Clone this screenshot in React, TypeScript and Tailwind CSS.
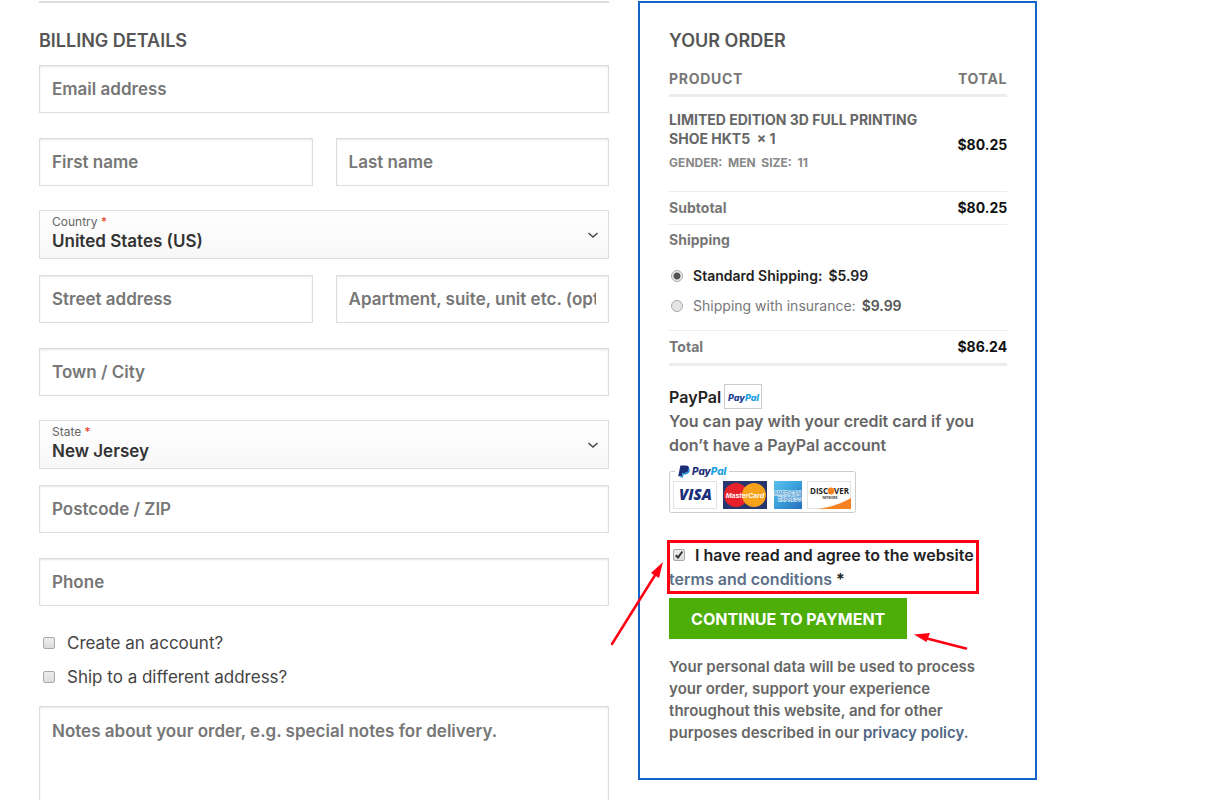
import React, { useState } from "react";

const inputClass =
  "block w-full min-w-0 h-12 px-3 border border-[#dddddd] bg-white text-[17px] font-semibold text-[#333333] placeholder:text-[#777777] placeholder:opacity-100 shadow-[inset_0_1px_2px_rgba(0,0,0,0.1)] outline-none";

type FieldProps = {
  id: string;
  label: string;
  type?: string;
};

const Field: React.FC<FieldProps> = ({ id, label, type = "text" }) => (
  <input id={id} type={type} aria-label={label} placeholder={label} className={inputClass} />
);

type SelectFieldProps = {
  id: string;
  label: string;
  options: string[];
};

const SelectField: React.FC<SelectFieldProps> = ({ id, label, options }) => (
  <div className="relative h-[49px] -mt-px -mb-[9px] border border-[#dddddd] bg-gradient-to-b from-white to-[#f7f7f7]">
    <label
      htmlFor={id}
      className="block px-3 pt-1 text-[12px] leading-[14px] text-[#666666]"
    >
      {label} <span className="text-[#e2401c]">*</span>
    </label>
    <select
      id={id}
      className="block w-full h-6 px-3 appearance-none bg-transparent text-[17px] leading-6 font-semibold text-[#333333] outline-none"
    >
      {options.map((option) => (
        <option key={option}>{option}</option>
      ))}
    </select>
    <svg
      className="pointer-events-none absolute right-[9px] top-5 w-3 h-2"
      viewBox="0 0 12 8"
      fill="none"
      stroke="#444444"
      strokeWidth="1.4"
    >
      <path d="M1.5 2l4.5 4 4.5-4" />
    </svg>
  </div>
);

type CheckProps = {
  id: string;
  checked: boolean;
  onChange: (checked: boolean) => void;
};

const CheckBox: React.FC<CheckProps> = ({ id, checked, onChange }) => (
  <span className="relative inline-block w-3 h-3 shrink-0">
    <input
      id={id}
      type="checkbox"
      checked={checked}
      onChange={(e) => onChange(e.target.checked)}
      className="block w-3 h-3 appearance-none rounded-xs border border-[#aaaaaa] bg-gradient-to-b from-[#eeeeee] to-[#dcdcdc]"
    />
    {checked && (
      <svg
        className="pointer-events-none absolute inset-0 w-3 h-3"
        viewBox="0 0 12 12"
        fill="none"
        stroke="#333333"
        strokeWidth="2"
      >
        <path d="M2.8 6.2l2.2 2.3 4.4-6" />
      </svg>
    )}
  </span>
);

/* Small bordered PayPal wordmark */
const PayPalBadge = () => (
  <svg className="w-[38px] h-[25px]" viewBox="0 0 38 25" role="img" aria-label="PayPal">
    <rect x="0.5" y="0.5" width="37" height="24" fill="#fff" stroke="#cccccc" />
    <text
      x="4"
      y="17"
      fontFamily="Inter, sans-serif"
      fontSize="9"
      fontWeight="800"
      fontStyle="italic"
      fill="#1b3d92"
    >
      Pay<tspan fill="#1a9fde">Pal</tspan>
    </text>
  </svg>
);

/* Accepted cards strip */
const CardLogos = () => (
  <svg
    className="block w-[188px] h-[50px]"
    viewBox="0 0 188 50"
    role="img"
    aria-label="PayPal, Visa, MasterCard, American Express, Discover"
  >
    <path
      d="M6 7.5H2.5a2 2 0 0 0-2 2v37a2 2 0 0 0 2 2h182a2 2 0 0 0 2-2v-37a2 2 0 0 0-2-2H60"
      fill="none"
      stroke="#cccccc"
    />
    <path d="M11.4 1.5h5.2c2.6 0 3.9 1.4 3.4 3.8-.6 2.7-2.4 3.8-5 3.8h-1.6l-.7 3.2H9.2z" fill="#1b2f77" />
    <path d="M19.6 3.8c1 .8 1.3 1.9 1 3.2-.6 2.4-2.2 3.4-4.6 3.4h-1.4l-.7 3h-2.6l.3-1.1h1.2l.8-3.2h1.6c2.5 0 4.2-1.2 4.4-5.3z" fill="#1a8fd6" />
    <text
      x="23"
      y="11"
      fontFamily="Inter, sans-serif"
      fontSize="10"
      fontWeight="800"
      fontStyle="italic"
      fill="#1b2f77"
    >
      Pay<tspan fill="#1a9fde">Pal</tspan>
    </text>

    {/* Visa */}
    <rect x="4.5" y="17.5" width="43" height="27" fill="#fff" stroke="#e3e3e3" />
    <text
      x="10"
      y="36"
      fontFamily="'Open Sans', sans-serif"
      fontSize="15"
      fontWeight="800"
      fontStyle="italic"
      fill="#1a2f7c"
    >
      VISA
    </text>

    {/* MasterCard */}
    <rect x="54" y="17" width="44" height="28" fill="#26366f" />
    <circle cx="67" cy="31" r="12" fill="#e8222b" />
    <circle cx="85" cy="31" r="12" fill="#f7a21b" />
    <text
      x="76"
      y="34"
      textAnchor="middle"
      fontFamily="'Liberation Sans', sans-serif"
      fontSize="7"
      fontWeight="700"
      fontStyle="italic"
      fill="#fff"
    >
      MasterCard
    </text>

    {/* American Express */}
    <defs>
      <linearGradient id="amex" x1="0" y1="0" x2="1" y2="1">
        <stop offset="0" stopColor="#5cc0ea" />
        <stop offset="0.45" stopColor="#3ba3dc" />
        <stop offset="1" stopColor="#2a6fbd" />
      </linearGradient>
    </defs>
    <rect x="105" y="17" width="28" height="28" fill="url(#amex)" />
    <g
      fontFamily="'Liberation Sans', sans-serif"
      fontSize="5"
      fontWeight="700"
      fill="#3d93cf"
      stroke="#fff"
      strokeWidth="1"
      paintOrder="stroke"
    >
      <text x="105" y="31">AMERICAN</text>
      <text x="109" y="37">EXPRESS</text>
    </g>

    {/* Discover */}
    <rect x="138.5" y="17.5" width="43" height="27" fill="#fff" stroke="#e3e3e3" />
    <path d="M149 45c12-1.5 25-6 33-11v11z" fill="#f58220" />
    <text
      x="141"
      y="30"
      fontFamily="'Open Sans', sans-serif"
      fontSize="8"
      fontWeight="700"
      fill="#222222"
    >
      DISC
    </text>
    <circle cx="162" cy="27" r="3.4" fill="#f58220" />
    <text
      x="165"
      y="30"
      fontFamily="'Open Sans', sans-serif"
      fontSize="8"
      fontWeight="700"
      fill="#222222"
    >
      VER
    </text>
    <text
      x="161"
      y="35"
      textAnchor="middle"
      fontFamily="'Open Sans', sans-serif"
      fontSize="3"
      fontWeight="700"
      fill="#333333"
    >
      NETWORK
    </text>
  </svg>
);

const shippingMethods = [
  { id: "standard", name: "Standard Shipping:", price: "$5.99" },
  { id: "insurance", name: "Shipping with insurance:", price: "$9.99" },
];

const BillingDetails = () => {
  const [createAccount, setCreateAccount] = useState(false);
  const [shipElsewhere, setShipElsewhere] = useState(false);

  return (
    <section className="border-t-2 border-[#dddddd] pt-6 min-w-0">
      <h3 className="h-[38px] text-[18px] leading-7 font-semibold text-[#555555]">
        BILLING DETAILS
      </h3>
      <div className="flex flex-col gap-[25px]">
        <Field id="email" label="Email address" type="email" />
        <div className="grid grid-cols-2 gap-[23px]">
          <Field id="first-name" label="First name" />
          <Field id="last-name" label="Last name" />
        </div>
        <SelectField id="country" label="Country" options={["United States (US)", "Canada"]} />
        <div className="grid grid-cols-2 gap-[23px]">
          <Field id="street" label="Street address" />
          <Field id="apartment" label="Apartment, suite, unit etc. (optional)" />
        </div>
        <Field id="city" label="Town / City" />
        <SelectField id="state" label="State" options={["New Jersey", "New York"]} />
        <Field id="postcode" label="Postcode / ZIP" />
        <Field id="phone" label="Phone" type="tel" />
      </div>

      <div className="pt-5 pb-3 pl-1 text-[17px] leading-[34px] text-[#444444]">
        <div className="flex items-center gap-3">
          <CheckBox id="create-account" checked={createAccount} onChange={setCreateAccount} />
          <label htmlFor="create-account">Create an account?</label>
        </div>
        <div className="flex items-center gap-3">
          <CheckBox id="ship-elsewhere" checked={shipElsewhere} onChange={setShipElsewhere} />
          <label htmlFor="ship-elsewhere">Ship to a different address?</label>
        </div>
      </div>

      <textarea
        id="notes"
        aria-label="Order notes"
        placeholder="Notes about your order, e.g. special notes for delivery."
        className="block w-full h-[120px] px-3 py-3 resize-none border border-[#dddddd] bg-white text-[17px] leading-6 font-semibold text-[#333333] placeholder:text-[#777777] placeholder:opacity-100 shadow-[inset_0_1px_2px_rgba(0,0,0,0.1)] outline-none"
      />
    </section>
  );
};

const OrderSummary = () => {
  const [shipping, setShipping] = useState("standard");
  const [agreed, setAgreed] = useState(true);

  return (
    <section className="border-2 border-[#1465c6] pt-6 pl-[29px] pr-7 pb-[34px] min-w-0 self-start">
      <h3 className="text-[18px] leading-7 font-semibold text-[#555555]">YOUR ORDER</h3>

      <table className="mt-[9px] w-full border-collapse text-[14px] text-[#777777]">
        <thead>
          <tr className="border-b-3 border-[#ececec] leading-[30px]">
            <th className="text-left font-bold tracking-wider">PRODUCT</th>
            <th className="text-right font-bold tracking-wider">TOTAL</th>
          </tr>
        </thead>
        <tbody>
          <tr className="border-b border-[#ececec]">
            <td className="pt-[13px] pb-[17px] font-bold">
              <p className="leading-[19px] text-[#666666]">
                LIMITED EDITION 3D FULL PRINTING SHOE HKT5 &nbsp;× 1
              </p>
              <p className="mt-1 text-[12px] leading-[22px] text-[#888888]">
                GENDER: &nbsp;MEN &nbsp;SIZE: &nbsp;11
              </p>
            </td>
            <td className="text-right font-bold text-[#111111]">$80.25</td>
          </tr>
          <tr className="border-b border-[#ececec] leading-8">
            <th className="text-left font-bold">Subtotal</th>
            <td className="text-right font-bold text-[#111111]">$80.25</td>
          </tr>
          <tr className="border-b border-[#ececec]">
            <td colSpan={2} className="pb-[9px]">
              <fieldset>
                <legend className="mb-1.5 leading-[30px] font-bold">Shipping</legend>
                {shippingMethods.map((method) => (
                  <div
                    key={method.id}
                    className="flex items-center gap-2.5 pl-0.5 leading-[30px]"
                  >
                    <input
                      id={method.id}
                      type="radio"
                      name="shipping"
                      checked={shipping === method.id}
                      onChange={() => setShipping(method.id)}
                      className="w-3 h-3 appearance-none rounded-full border border-[#aaaaaa] bg-[#e4e4e4] checked:bg-[radial-gradient(circle,#555555_0,#555555_3px,#eeeeee_4px)]"
                    />
                    <label
                      htmlFor={method.id}
                      className={
                        shipping === method.id ? "font-semibold text-[#222222]" : "text-[#777777]"
                      }
                    >
                      {method.name}
                      <span
                        className={
                          shipping === method.id
                            ? "ml-1.5 font-semibold text-[#222222]"
                            : "ml-1.5 font-semibold text-[#555555]"
                        }
                      >
                        {method.price}
                      </span>
                    </label>
                  </div>
                ))}
              </fieldset>
            </td>
          </tr>
          <tr className="border-b-3 border-[#ececec] leading-8">
            <th className="text-left font-bold">Total</th>
            <td className="text-right font-bold text-[#111111]">$86.24</td>
          </tr>
        </tbody>
      </table>

      <div className="mt-[18px] text-[16px] leading-6 font-semibold text-[#666666]">
        <div className="flex items-center gap-[3px] text-[#222222]">
          PayPal <PayPalBadge />
        </div>
        <p>You can pay with your credit card if you don’t have a PayPal account</p>
      </div>
      <div className="mt-[7px]">
        <CardLogos />
      </div>

      <div className="relative mt-[29px] text-[16px] leading-6 font-semibold text-[#222222]">
        <label htmlFor="terms">
          <span className="ml-1 mr-2.5">
            <CheckBox id="terms" checked={agreed} onChange={setAgreed} />
          </span>
          I have read and agree to the website
        </label>{" "}
        <span className="block">
          <a href="#terms" className="text-[#5b6f88]">
            terms and conditions
          </a>{" "}
          *
        </span>
        {/* Highlight around the agreement */}
        <div className="pointer-events-none absolute -left-0.5 -inset-y-[3px] right-7 border-3 border-[#ff0013]" />
        <svg
          className="pointer-events-none absolute right-full top-[18px] mr-1 w-[56px] h-[86px]"
          viewBox="0 0 56 86"
        >
          <path d="M3 83L48 11" stroke="#ff0013" strokeWidth="2.5" strokeLinecap="round" />
          <path d="M54 1L42 12l8 5z" fill="#ff0013" />
        </svg>
      </div>

      <div className="mt-[7px] flex items-start">
        <button
          type="button"
          className="h-[41px] px-[22px] bg-[#4dae08] text-[16px] font-bold text-white whitespace-nowrap"
        >
          CONTINUE TO PAYMENT
        </button>
        <svg className="ml-1.5 mt-8 w-[56px] h-[22px]" viewBox="0 0 56 22">
          <path d="M53 18.5L14 8.5" stroke="#ff0013" strokeWidth="2.5" strokeLinecap="round" />
          <path d="M1 4.500L17 3l-3.500 9z" fill="#ff0013" />
        </svg>
      </div>

      <p className="mt-1 pr-6 text-[15px] leading-[22px] font-semibold text-[#666666]">
        Your personal data will be used to process your order, support your experience throughout
        this website, and for other purposes described in our{" "}
        <a href="#privacy" className="text-[#4f6785]">
          privacy policy
        </a>
        .
      </p>
    </section>
  );
};

const App: React.FC = () => {
  return (
    <main className="min-h-screen bg-white font-[Inter,sans-serif]">
      <form className="grid grid-cols-[10fr_7fr] gap-[29px] pt-px pl-[39px] pr-[14%]">
        <BillingDetails />
        <OrderSummary />
      </form>
    </main>
  );
};

export default App;
